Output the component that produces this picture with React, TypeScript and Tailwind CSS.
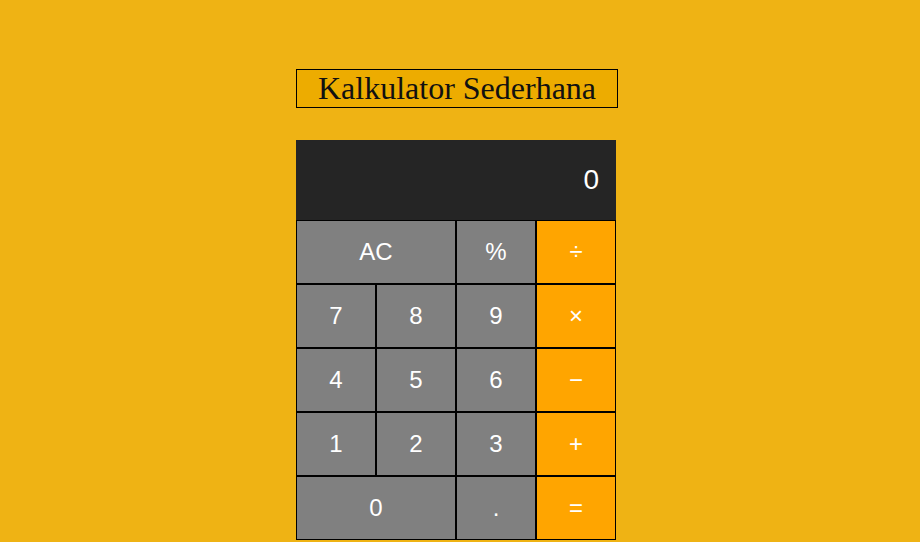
import React from "react";

type Btn = { label: string; span?: boolean; op?: boolean };

const buttons: Btn[] = [
  { label: "AC", span: true },
  { label: "%" },
  { label: "÷", op: true },
  { label: "7" },
  { label: "8" },
  { label: "9" },
  { label: "×", op: true },
  { label: "4" },
  { label: "5" },
  { label: "6" },
  { label: "−", op: true },
  { label: "1" },
  { label: "2" },
  { label: "3" },
  { label: "+", op: true },
  { label: "0", span: true },
  { label: "." },
  { label: "=", op: true },
];

export default function App() {
  return (
    <div className="min-h-screen w-full bg-[#efb314] pt-[69px]">
      <div className="ml-[296px] w-[322px]">
        <h1
          className="box-border h-[39px] w-[322px] border border-black bg-[#edac00] text-center text-[32px] leading-[37px] text-[#111]"
          style={{ fontFamily: '"Liberation Serif", "Times New Roman", serif' }}
        >
          Kalkulator Sederhana
        </h1>
        <div
          className="mt-[32px] w-[320px]"
          style={{ fontFamily: '"Liberation Sans", Arial, sans-serif' }}
        >
          <div className="flex h-[80px] items-center justify-end bg-[#252525] pr-[17px] text-[28px] text-white">
            0
          </div>
          <div className="grid grid-cols-[repeat(4,80px)] grid-rows-[repeat(5,64px)]">
            {buttons.map((b, i) => (
              <button
                key={i}
                className={
                  "box-border flex items-center justify-center border border-black text-[24px] text-white " +
                  (b.span ? "col-span-2 " : "") +
                  (b.op ? "bg-[#ffa500]" : "bg-[#808080]")
                }
              >
                {b.label}
              </button>
            ))}
          </div>
        </div>
      </div>
    </div>
  );
}
